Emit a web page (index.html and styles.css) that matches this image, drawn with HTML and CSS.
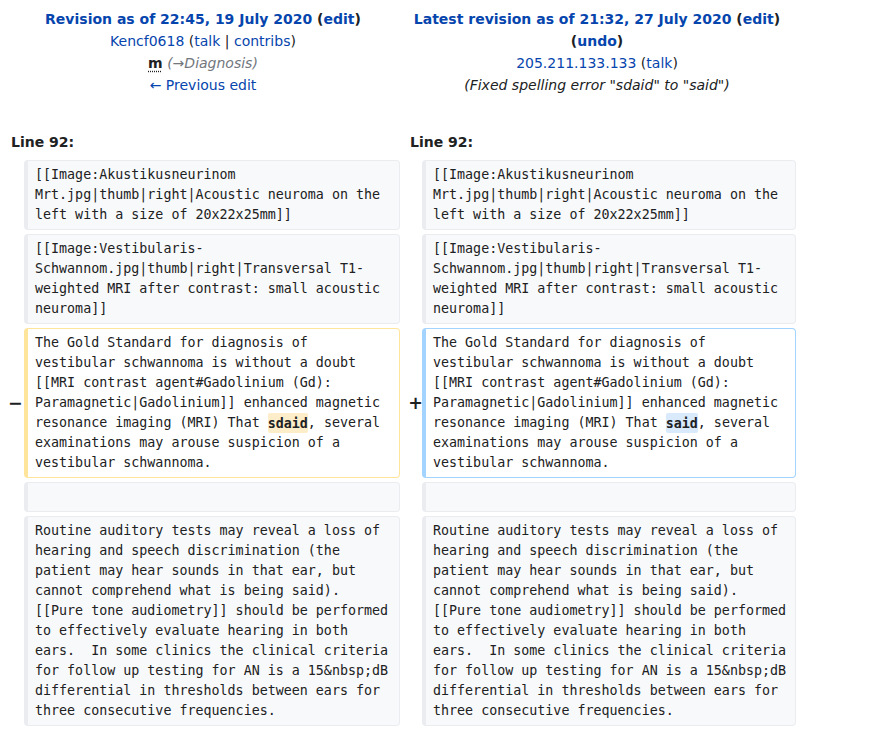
FILE: index.html
```html
<!DOCTYPE html>
<html>
<head>
<meta charset="utf-8">
<link rel="stylesheet" href="styles.css">
</head>
<body>
<div class="diff">
  <div class="diff-head">
    <div class="title">
      <div class="tline"><strong><a href="#">Revision as of 22:45, 19 July 2020</a> (<a href="#">edit</a>)</strong></div>
      <div class="tline"><a href="#">Kencf0618</a> (<a href="#">talk</a> | <a href="#">contribs</a>)</div>
      <div class="tline"><abbr class="minor">m</abbr> <span class="autocomment">(→Diagnosis)</span></div>
      <div class="tline"><a href="#">← Previous edit</a></div>
    </div>
    <div class="title">
      <div class="tline"><strong><a href="#">Latest revision as of 21:32, 27 July 2020</a> (<a href="#">edit</a>)</strong></div>
      <div class="tline"><strong>(<a href="#">undo</a>)</strong></div>
      <div class="tline"><a href="#">205.211.133.133</a> (<a href="#">talk</a>)</div>
      <div class="tline"><span class="comment">(Fixed spelling error "sdaid" to "said")</span></div>
    </div>
  </div>

  <div class="diff-grid">
    <div class="lineno lineno-left">Line 92:</div>
    <div class="lineno lineno-right">Line 92:</div>

    <div class="marker"></div>
    <div class="cell context">[[Image:Akustikusneurinom<br>Mrt.jpg|thumb|right|Acoustic neuroma on the<br>left with a size of 20x22x25mm]]</div>
    <div class="marker"></div>
    <div class="cell context">[[Image:Akustikusneurinom<br>Mrt.jpg|thumb|right|Acoustic neuroma on the<br>left with a size of 20x22x25mm]]</div>

    <div class="marker"></div>
    <div class="cell context">[[Image:Vestibularis-<br>Schwannom.jpg|thumb|right|Transversal T1-<br>weighted MRI after contrast: small acoustic<br>neuroma]]</div>
    <div class="marker"></div>
    <div class="cell context">[[Image:Vestibularis-<br>Schwannom.jpg|thumb|right|Transversal T1-<br>weighted MRI after contrast: small acoustic<br>neuroma]]</div>

    <div class="marker marker-del">−</div>
    <div class="cell deleted">The Gold Standard for diagnosis of<br>vestibular schwannoma is without a doubt<br>[[MRI contrast agent#Gadolinium (Gd):<br>Paramagnetic|Gadolinium]] enhanced magnetic<br>resonance imaging (MRI) That <del class="change">sdaid</del>, several<br>examinations may arouse suspicion of a<br>vestibular schwannoma.</div>
    <div class="marker marker-add">+</div>
    <div class="cell added">The Gold Standard for diagnosis of<br>vestibular schwannoma is without a doubt<br>[[MRI contrast agent#Gadolinium (Gd):<br>Paramagnetic|Gadolinium]] enhanced magnetic<br>resonance imaging (MRI) That <ins class="change">said</ins>, several<br>examinations may arouse suspicion of a<br>vestibular schwannoma.</div>

    <div class="marker"></div>
    <div class="cell context"><br></div>
    <div class="marker"></div>
    <div class="cell context"><br></div>

    <div class="marker"></div>
    <div class="cell context">Routine auditory tests may reveal a loss of<br>hearing and speech discrimination (the<br>patient may hear sounds in that ear, but<br>cannot comprehend what is being said).<br>[[Pure tone audiometry]] should be performed<br>to effectively evaluate hearing in both<br>ears.  In some clinics the clinical criteria<br>for follow up testing for AN is a 15&amp;nbsp;dB<br>differential in thresholds between ears for<br>three consecutive frequencies.</div>
    <div class="marker"></div>
    <div class="cell context">Routine auditory tests may reveal a loss of<br>hearing and speech discrimination (the<br>patient may hear sounds in that ear, but<br>cannot comprehend what is being said).<br>[[Pure tone audiometry]] should be performed<br>to effectively evaluate hearing in both<br>ears.  In some clinics the clinical criteria<br>for follow up testing for AN is a 15&amp;nbsp;dB<br>differential in thresholds between ears for<br>three consecutive frequencies.</div>
  </div>
</div>
</body>
</html>
```

FILE: styles.css
```css
html, body {
  background: #ffffff;
}
body {
  margin: 8px 0 0 8px;
  font-family: "DejaVu Sans", sans-serif;
  font-size: 14px;
  color: #202122;
}
a {
  color: #0645ad;
  text-decoration: none;
}
.diff {
  width: 788px;
}
.diff-head {
  display: grid;
  grid-template-columns: 390px 398px;
}
.title {
  text-align: center;
  line-height: 22px;
}
.tline {
  white-space: nowrap;
}
.minor {
  font-weight: bold;
  text-decoration: underline dotted;
  text-underline-offset: 3px;
  color: #202122;
}
.autocomment {
  font-style: italic;
  color: #72777d;
}
.comment {
  font-style: italic;
}
.diff-grid {
  display: grid;
  grid-template-columns: 16px 376px 22px 374px;
  row-gap: 4px;
  margin-top: 35px;
}
.lineno {
  font-weight: bold;
  line-height: 22px;
  margin-bottom: 3px;
}
.lineno-left {
  grid-column: 1 / 3;
  padding-left: 3px;
}
.lineno-right {
  grid-column: 3 / 5;
  padding-left: 10px;
}
.marker {
  align-self: center;
  text-align: right;
  font-weight: bold;
  font-size: 17.5px;
  line-height: 1.2;
}
.marker-del {
  padding-right: 4px;
}
.marker-add {
  padding-right: 0;
  margin-right: -1px;
}
.cell {
  font-family: "DejaVu Sans Mono", monospace;
  font-size: 13.33px;
  line-height: 20px;
  white-space: pre-wrap;
  border-style: solid;
  border-width: 1px 1px 1px 4px;
  border-radius: 4px;
  padding: 4px 7px 4px 7px;
}
.context {
  background: #f8f9fa;
  border-color: #eaecf0;
  color: #202122;
}
.deleted {
  background: #ffffff;
  border-color: #ffe49c;
}
.added {
  background: #ffffff;
  border-color: #a3d3ff;
}
.change {
  font-weight: bold;
  text-decoration: none;
  border-radius: 2px;
  padding: 2.5px 0;
}
.deleted .change {
  background: #feedc9;
}
.added .change {
  background: #d8eafc;
}
```
